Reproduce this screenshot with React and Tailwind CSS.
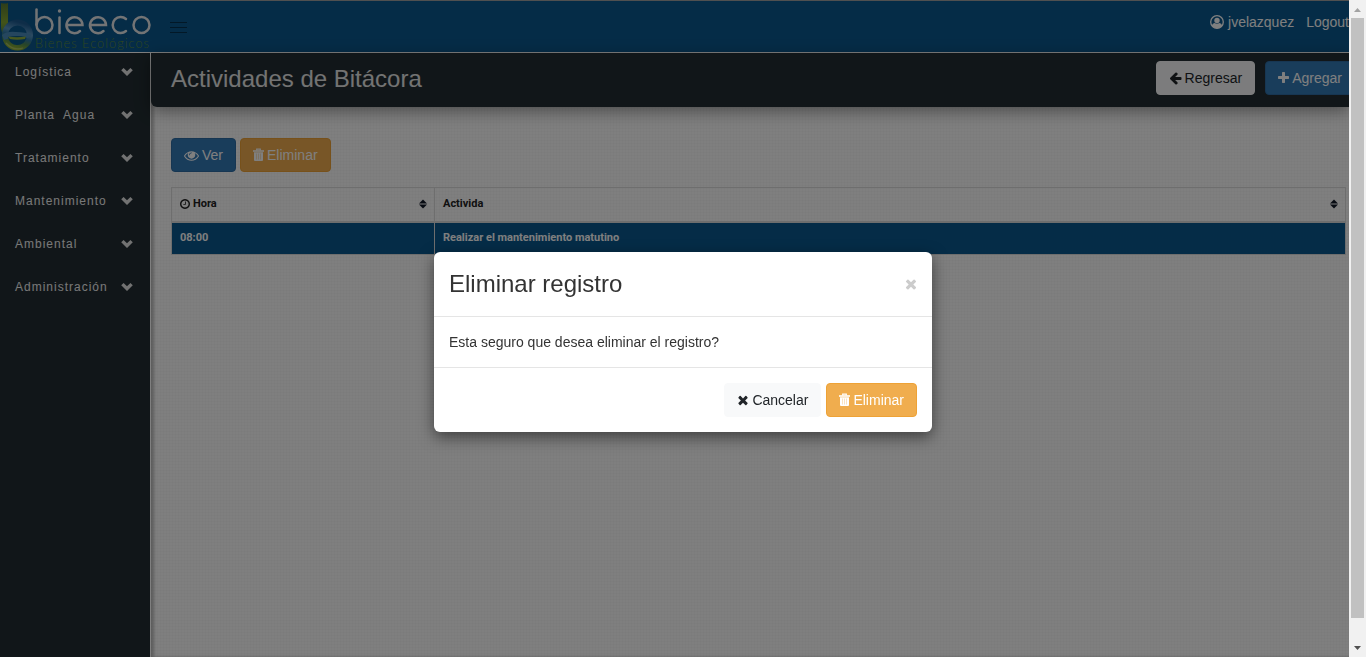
import React from "react";

const icons = {
  remove: {
    box: "192 0 1408 1792",
    d: "M1490 1322q0 40-28 68l-136 136q-28 28-68 28t-68-28l-294-294-294 294q-28 28-68 28t-68-28l-136-136q-28-28-28-68t28-68l294-294-294-294q-28-28-28-68t28-68l136-136q28-28 68-28t68 28l294 294 294-294q28-28 68-28t68 28l136 136q28 28 28 68t-28 68l-294 294 294 294q28 28 28 68z",
  },
  plus: {
    box: "192 0 1408 1792",
    d: "M1600 736v192q0 40-28 68t-68 28h-416v416q0 40-28 68t-68 28h-192q-40 0-68-28t-28-68v-416h-416q-40 0-68-28t-28-68v-192q0-40 28-68t68-28h416v-416q0-40 28-68t68-28h192q40 0 68 28t28 68v416h416q40 0 68 28t28 68z",
  },
  arrow: {
    box: "128 0 1536 1792",
    d: "M1664 896v128q0 53-32.5 90.5t-84.5 37.5h-704l293 294q38 36 38 90t-38 90l-75 76q-37 37-90 37-52 0-91-37l-651-652q-37-37-37-90 0-52 37-91l651-650q38-38 91-38 52 0 90 38l75 74q38 38 38 91t-38 91l-293 293h704q52 0 84.5 37.5t32.5 90.5z",
  },
  eye: {
    box: "0 0 1792 1792",
    d: "M1664 960q-152-236-381-353 61 104 61 225 0 185-131.5 316.5t-316.5 131.5-316.5-131.5-131.5-316.5q0-121 61-225-229 117-381 353 133 205 333.5 326.5t434.5 121.5 434.5-121.5 333.5-326.5zm-720-384q0-20-14-34t-34-14q-125 0-214.5 89.5t-89.5 214.5q0 20 14 34t34 14 34-14 14-34q0-86 61-147t147-61q20 0 34-14t14-34zm848 384q0 34-20 69-140 230-376.5 368.5t-499.5 138.5-499.5-139-376.5-368q-20-35-20-69t20-69q140-229 376.5-368t499.5-139 499.5 139 376.5 368q20 35 20 69z",
  },
  clock: {
    box: "128 128 1536 1536",
    d: "M1024 544v448q0 14-9 23t-23 9h-320q-14 0-23-9t-9-23v-64q0-14 9-23t23-9h224v-352q0-14 9-23t23-9h64q14 0 23 9t9 23zm416 352q0-148-73-273t-198-198-273-73-273 73-198 198-73 273 73 273 198 198 273 73 273-73 198-198 73-273zm224 0q0 209-103 385.5t-279.5 279.5-385.5 103-385.5-103-279.5-279.5-103-385.5 103-385.5 279.5-279.5 385.5-103 385.5 103 279.5 279.5 103 385.5z",
  },
  chevron: { box: "0 0 12 12", d: "M6 10L0.200 4.300 2.600 1.900 6 5.200 9.400 1.900 11.800 4.300z" },
};

function Icon({ name, className }) {
  return (
    <svg aria-hidden="true" viewBox={icons[name].box} fill="currentColor" className={`shrink-0 ${className}`}>
      <path d={icons[name].d} />
    </svg>
  );
}

function TrashIcon() {
  return (
    <svg aria-hidden="true" viewBox="0 0 11 14" className="h-3.5 w-[11px] shrink-0">
      <path d="M3.700 2.500V1.200h3.600v1.300" fill="none" stroke="currentColor" strokeWidth="1.2" />
      <path d="M0 2.200h11v1.600H0z" fill="currentColor" />
      <path d="M1 4.200h9V12q0 1-1 1H2q-1 0-1-1z" fill="currentColor" />
      <path d="M3.500 5.500v6M5.500 5.500v6M7.500 5.500v6" stroke="#f0ad4e" strokeOpacity="0.45" strokeWidth="0.8" />
    </svg>
  );
}

function UserIcon() {
  return (
    <svg aria-hidden="true" viewBox="0 0 14 14" className="size-3.5">
      <circle cx="7" cy="7" r="6.300" fill="none" stroke="currentColor" strokeWidth="1.300" />
      <circle cx="7" cy="5.500" r="2.700" fill="currentColor" />
      <path d="M1.800 10.800q.6-2.600 2.800-2.800Q7 9.600 9.400 8q2.200.2 2.800 2.800Q10 13.400 7 13.400T1.800 10.800z" fill="currentColor" />
    </svg>
  );
}

function SortIcon() {
  return (
    <svg aria-hidden="true" viewBox="0 0 8 10" fill="#111827" className="h-2.5 w-2 shrink-0">
      <path d="M4 0.500l4 4H0zM4 9.500l4-4H0z" />
    </svg>
  );
}

function Logo() {
  return (
    <a href="#inicio" aria-label="bieeco Bienes Ecológicos" className="block w-[152px] shrink-0">
      <svg viewBox="0 0 152 52" className="block w-full">
        <defs>
          <linearGradient id="stem" x1="0" y1="0" x2="0" y2="1">
            <stop offset="0" stopColor="#5c7a34" />
            <stop offset="0.6" stopColor="#86a832" />
            <stop offset="1" stopColor="#4f8148" />
          </linearGradient>
          <linearGradient id="ring" x1="0.600" y1="0" x2="0.300" y2="1">
            <stop offset="0" stopColor="#1c5a90" />
            <stop offset="0.35" stopColor="#5b97c4" />
            <stop offset="0.55" stopColor="#2f78a6" />
            <stop offset="0.75" stopColor="#4f8a52" />
            <stop offset="1" stopColor="#8fb02f" />
          </linearGradient>
        </defs>
        <path d="M1 2q4 1 7 0v20q-4 5-4 12-3-3-3-8z" fill="url(#stem)" />
        <circle cx="17.500" cy="34" r="12.500" fill="none" stroke="url(#ring)" strokeWidth="6" />
        <path d="M2 34q5-4 14-3 10 0 16 3l-4 3q-12-4-24 2z" fill="#4a8dbd" />
        <path d="M8 36q9-2 18 0-1 8-9 8-7 0-9-8z" fill="#0b5a86" />
        <path d="M8 35.500q9 1.500 18 0l-1 2.500q-8 1.500-15 0z" fill="#8fb03f" />
        <path d="M6 42q7 8 17 5" fill="none" stroke="#b5c97a" strokeWidth="1.200" strokeOpacity="0.7" />
        <g fill="none" stroke="#e6e8ea" strokeWidth="2.500" strokeLinecap="round">
          <path d="M36.500 8.500v15" />
          <circle cx="44.500" cy="24" r="8" />
          <path d="M59.500 16.500v15.500" />
          <path d="M67 24h15.500A8 8 0 1 0 80 30M90.500 24H106A8 8 0 1 0 103.500 30" />
          <path d="M126 18A8 8 0 1 0 126 30" />
          <circle cx="141.500" cy="24" r="8" />
        </g>
        <circle cx="59.500" cy="10" r="1.700" fill="#e6e8ea" />
        <text x="35" y="46.500" fill="#5b8c42" fontFamily="Lato, sans-serif" fontWeight="300" fontSize="12.800" letterSpacing="1">Bienes Ecológicos</text>
      </svg>
    </a>
  );
}

const menu = ["Logística", "Planta\u00a0 Agua", "Tratamiento", "Mantenimiento", "Ambiental", "Administración"];

const btn = "flex h-[34px] items-center gap-[3px] rounded border px-3 text-sm leading-5 whitespace-nowrap";
const light = "border-[#f8f9fa] bg-[#f8f9fa] text-[#212529]";
const primary = "border-[#2e6da4] bg-[#337ab7] text-white";
const warning = "border-[#eea236] bg-[#f0ad4e] text-white";

export default function App() {
  return (
    <div className="flex h-screen overflow-hidden bg-white font-['Liberation_Sans',Arial,sans-serif] text-sm text-[#333]">
      <div className="relative flex min-w-0 flex-1 flex-col overflow-hidden">
        <header className="flex h-[53px] shrink-0 items-start justify-between border-t border-b border-t-[#a0a0a0] border-b-white bg-[#0b588e]">
          <div className="flex">
            <Logo />
            <button aria-label="Menú" className="ml-[18px] flex h-[52px] w-[17px] flex-col justify-center gap-1">
              <span className="h-px w-full bg-[#05314f]" />
              <span className="h-px w-full bg-[#05314f]" />
              <span className="h-px w-full bg-[#05314f]" />
            </button>
          </div>
          <nav className="flex gap-3 pt-[11px] leading-5 text-white">
            <a href="#perfil" className="flex items-center gap-1"><UserIcon />jvelazquez</a>
            <a href="#logout">Logout</a>
          </nav>
        </header>
        <div className="flex min-h-0 flex-1">
          <aside className="w-[151px] shrink-0 border-r border-white bg-[#222d32]">
            <ul>
              {menu.map((item) => (
                <li key={item}>
                  <button className="flex h-[43px] w-full items-start justify-between pt-[11px] pr-[17px] pl-[15px] text-xs leading-4 tracking-[1px] text-[#f0f0f0]">
                    {item}
                    <Icon name="chevron" className="mt-0.5 size-3 text-[#e4e4e4]" />
                  </button>
                </li>
              ))}
            </ul>
          </aside>
          <div className="flex min-w-0 flex-1 flex-col bg-[#fefefe] bg-[repeating-linear-gradient(0deg,#00000004_0_1px,transparent_1px_3px),repeating-linear-gradient(90deg,#00000004_0_1px,transparent_1px_3px)] shadow-[inset_3px_0_3px_rgba(0,0,0,0.25)]">
            <div className="flex h-[54px] shrink-0 items-start justify-between rounded-bl-md bg-[#222d32] pt-2 pl-5 shadow-[0_4px_16px_rgba(0,0,0,0.4)]">
              <h1 className="text-2xl leading-9 text-[#e6e6e6]">Actividades de Bitácora</h1>
              <div className="-mr-1.5 flex gap-2.5">
                <button className={`${btn} ${light}`}><Icon name="arrow" className="h-3.5 w-[13px]" />Regresar</button>
                <button className={`${btn} ${primary}`}><Icon name="plus" className="h-3.5 w-[11px]" />Agregar</button>
              </div>
            </div>
            <main className="pt-[31px] pr-[3px] pl-5">
              <div className="flex gap-1">
                <button className={`${btn} ${primary}`}><Icon name="eye" className="size-[15px]" />Ver</button>
                <button className={`${btn} ${warning}`}><TrashIcon />Eliminar</button>
              </div>
              <table className="mt-[15px] w-full table-fixed border-collapse border border-[#ddd] text-left font-[Roboto,sans-serif] text-[11px] leading-4 font-bold text-[#222]">
                <thead>
                  <tr className="h-[34px] border-b-2 border-[#ddd]">
                    <th className="w-[263px] border-r border-[#ddd] pr-[7px] pl-2">
                      <span className="flex items-center gap-[3px]"><Icon name="clock" className="size-2.5" /><span className="flex-1">Hora</span><SortIcon /></span>
                    </th>
                    <th className="pr-[7px] pl-2">
                      <span className="flex items-center"><span className="flex-1">Activida</span><SortIcon /></span>
                    </th>
                  </tr>
                </thead>
                <tbody>
                  <tr className="h-[33px] bg-[#0b588e] text-white">
                    <td className="border-r border-[#ddd] px-2">08:00</td>
                    <td className="px-2">Realizar el mantenimiento matutino</td>
                  </tr>
                </tbody>
              </table>
            </main>
          </div>
        </div>
        <div className="absolute inset-0 bg-black/50" />
      </div>

      <div aria-hidden="true" className="flex w-[17px] shrink-0 flex-col items-center bg-[#f1f1f1]">
        <svg viewBox="0 0 17 17" className="size-[17px] shrink-0"><path d="M5 12l3.500-4 3.500 4z" fill="#a3a3a3" /></svg>
        <div className="mt-px w-[13px] flex-1 bg-[#c1c1c1]" />
        <div className="h-[22px]" />
        <svg viewBox="0 0 17 17" className="size-[17px] shrink-0"><path d="M5 6l3.500 4L12 6z" fill="#505050" /></svg>
      </div>

      <div className="fixed inset-0 flex items-start justify-center pt-[252px]">
        <section role="dialog" aria-modal="true" aria-labelledby="dialog-title" className="w-[498px] rounded-md bg-white shadow-[0_5px_15px_rgba(0,0,0,0.5)]">
          <div className="flex h-[65px] items-center justify-between border-b border-[#e5e5e5] px-[15px]">
            <h2 id="dialog-title" className="text-2xl">Eliminar registro</h2>
            <button aria-label="Cerrar" className="text-[#ccc]"><Icon name="remove" className="h-4 w-3" /></button>
          </div>
          <p className="border-b border-[#e5e5e5] p-[15px] leading-5">Esta seguro que desea eliminar el registro?</p>
          <div className="flex justify-end gap-[5px] p-[15px]">
            <button className={`${btn} ${light}`}><Icon name="remove" className="h-3.5 w-3" />Cancelar</button>
            <button className={`${btn} ${warning}`}><TrashIcon />Eliminar</button>
          </div>
        </section>
      </div>
    </div>
  );
}
